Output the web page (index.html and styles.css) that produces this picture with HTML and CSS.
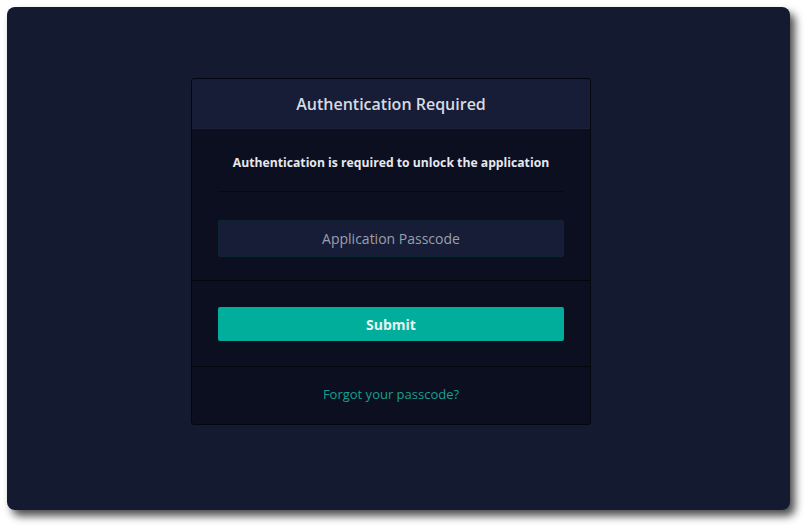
FILE: index.html
```html
<!DOCTYPE html>
<html>
<head>
<meta charset="utf-8">
<link rel="stylesheet" href="styles.css">
</head>
<body>
<div class="window">
  <div class="card">
    <div class="card-header">Authentication Required</div>
    <div class="section first">
      <p class="lead">Authentication is required to unlock the application</p>
      <div class="rule"></div>
      <input class="field" type="password" placeholder="Application Passcode">
    </div>
    <div class="section second">
      <button class="submit">Submit</button>
    </div>
    <div class="section footer">
      <a class="forgot" href="#">Forgot your passcode?</a>
    </div>
  </div>
</div>
</body>
</html>
```
FILE: styles.css
```css
* { box-sizing: border-box; }
html, body { margin: 0; padding: 0; background: #ffffff; }
body {
  font-family: "Open Sans", "Noto Sans", "Liberation Sans", sans-serif;
  width: 812px;
  height: 532px;
  overflow: hidden;
}
.window {
  margin: 7px 0 0 7px;
  width: 783px;
  height: 503px;
  background: #141a2f;
  border-radius: 8px;
  box-shadow: 5px 6px 8px rgba(0, 0, 0, 0.7);
  padding: 71px 0 0 184px;
}
.card {
  width: 400px;
  background: #0b0f1f;
  border: 1px solid #05070f;
  border-radius: 3px;
  overflow: hidden;
}
.card-header {
  height: 50px;
  background: #171c37;
  border-bottom: 1px solid #1c2238;
  color: #d8dae0;
  font-size: 16px;
  font-weight: 600;
  display: flex;
  align-items: center;
  justify-content: center;
}
.section {
  padding: 0 26px;
  border-bottom: 1px solid #04060d;
}
.section.first { padding-top: 24px; padding-bottom: 23px; }
.lead {
  margin: 0;
  text-align: center;
  color: #e6e8ee;
  font-size: 12.2px;
  font-weight: 700;
  line-height: 20px;
}
.rule {
  height: 1px;
  background: #060912;
  margin: 18px 0 28px;
}
.field {
  display: block;
  width: 100%;
  height: 37px;
  background: #171c37;
  border: 1px solid #102533;
  border-radius: 2px;
  color: #c8ccd4;
  font-family: inherit;
  font-size: 14px;
  text-align: center;
  outline: none;
}
.field::placeholder { color: #9aa0aa; }
.section.second { padding-top: 26px; padding-bottom: 25px; }
.submit {
  display: block;
  width: 100%;
  height: 34px;
  background: #00ae9b;
  border: none;
  border-radius: 2px;
  color: #e4f3f1;
  font-family: inherit;
  font-size: 14px;
  font-weight: 700;
}
.section.footer {
  border-bottom: none;
  height: 57px;
  padding-bottom: 4px;
  display: flex;
  align-items: center;
  justify-content: center;
}
.forgot {
  color: #17a08f;
  font-size: 13px;
  text-decoration: none;
}
```
